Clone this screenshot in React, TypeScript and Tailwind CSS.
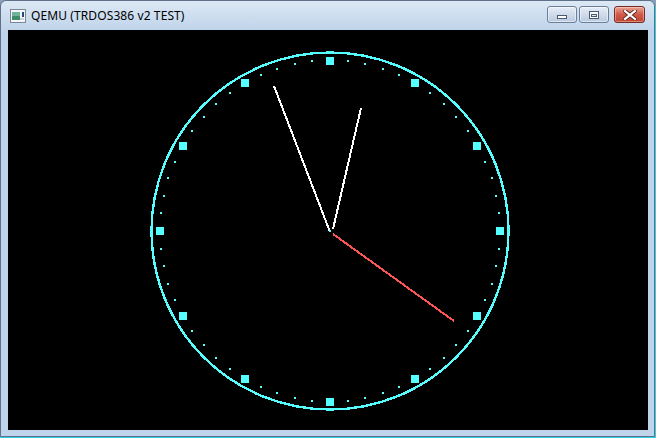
import React from "react";

const CX = 322;
const CY = 201;
const RX = 170;
const RY = 170.5;

function Clock() {
  const markers = [];
  for (let i = 0; i < 60; i++) {
    const a = (i * 6 * Math.PI) / 180;
    const x = CX + RX * Math.sin(a);
    const y = CY - RY * Math.cos(a);
    if (i % 5 === 0) {
      markers.push(
        <rect key={i} x={Math.round(x - 4)} y={Math.round(y - 4)} width={8} height={8} fill="#55ffff" />
      );
    } else {
      markers.push(
        <rect key={i} x={Math.round(x - 1)} y={Math.round(y - 1)} width={2} height={2} fill="#55ffff" />
      );
    }
  }
  return (
    <svg width={640} height={400} viewBox="0 0 640 400" shapeRendering="crispEdges" className="block">
      <rect width={640} height={400} fill="#000" />
      <circle cx={CX} cy={CY} r={178.5} fill="none" stroke="#55ffff" strokeWidth={2.4} />
      {markers}
      <line x1={CX} y1={CY + 1} x2={266} y2={56} stroke="#ffffff" strokeWidth={2} />
      <line x1={CX + 3} y1={CY - 2} x2={353} y2={78} stroke="#ffffff" strokeWidth={2} />
      <line x1={CX + 3} y1={CY + 3} x2={446} y2={291} stroke="#ff5555" strokeWidth={2} />
      <rect x={CX - 1} y={CY - 1} width={2} height={2} fill="#55ffff" />
    </svg>
  );
}

function Btn({ kind }: { kind: "min" | "max" | "close" }) {
  if (kind === "close") {
    return (
      <div className="w-[31px] h-[17px] rounded-[3px] border border-[#7a2a22] bg-gradient-to-b from-[#e8a393] via-[#d2594a] to-[#c3432f] flex items-center justify-center shadow-[inset_0_0_0_1px_rgba(255,255,255,0.35)]">
        <svg width="14" height="10" viewBox="0 0 14 10">
          <path d="M2 1 L12 9 M12 1 L2 9" stroke="#5a2a24" strokeWidth="4" strokeLinecap="square" />
          <path d="M2 1 L12 9 M12 1 L2 9" stroke="#ffffff" strokeWidth="2.2" strokeLinecap="square" />
        </svg>
      </div>
    );
  }
  return (
    <div className="w-[30px] h-[17px] rounded-[3px] border border-[#6d7f98] bg-gradient-to-b from-[#e6eef8] via-[#cfdbea] to-[#b9cbe1] flex items-center justify-center shadow-[inset_0_0_0_1px_rgba(255,255,255,0.5)]">
      {kind === "min" ? (
        <div className="w-[10px] h-[4px] mt-[4px] bg-white border border-[#4a5a70]" />
      ) : (
        <div className="w-[10px] h-[8px] border border-[#4a5a70] bg-white flex items-center justify-center">
          <div className="w-[6px] h-[3px] mt-[1px] border border-[#4a5a70] bg-[#dfe8f3]" />
        </div>
      )}
    </div>
  );
}

export default function App() {
  return (
    <div className="w-[656px] h-[438px] bg-[#8a9fb8] overflow-hidden relative">
      <div className="w-[655px] h-[437px] rounded-t-[6px] border border-[#5f7189] bg-[#bfd4ea] flex flex-col">
        <div
          className="h-[29px] flex items-center pl-[9px] pr-[9px] rounded-t-[6px] bg-gradient-to-b from-[#dce8f5] to-[#c0d4ea]"
          style={{ fontFamily: '"Noto Sans", "Open Sans", sans-serif' }}
        >
          <svg width="16" height="14" viewBox="0 0 16 14" className="mr-[5px] mt-[1px]">
            <rect x="0.5" y="0.5" width="15" height="13" fill="#f4f6f8" stroke="#7a8796" />
            <rect x="2" y="3" width="8" height="8" fill="#3f8c6a" />
            <rect x="2" y="3" width="8" height="4" fill="#6fb39a" />
            <rect x="12" y="3" width="2" height="5" fill="#244a7a" />
            <rect x="10" y="9" width="4" height="2" fill="#c9d2dc" />
          </svg>
          <span className="text-[12px] text-black leading-none tracking-[0.1px]">QEMU (TRDOS386 v2 TEST)</span>
          <div className="ml-auto flex items-center gap-[2px] mt-[-2px]">
            <Btn kind="min" />
            <Btn kind="max" />
            <div className="w-[1px]" />
            <Btn kind="close" />
          </div>
        </div>
        <div className="pl-[7px] pt-0">
          <Clock />
        </div>
      </div>
      <div className="absolute left-0 bottom-0 w-full h-[1px] bg-[#2fd0e0]" />
      <div className="absolute right-0 top-[6px] w-[1px] h-full bg-[#2fd0e0]" />
    </div>
  );
}
